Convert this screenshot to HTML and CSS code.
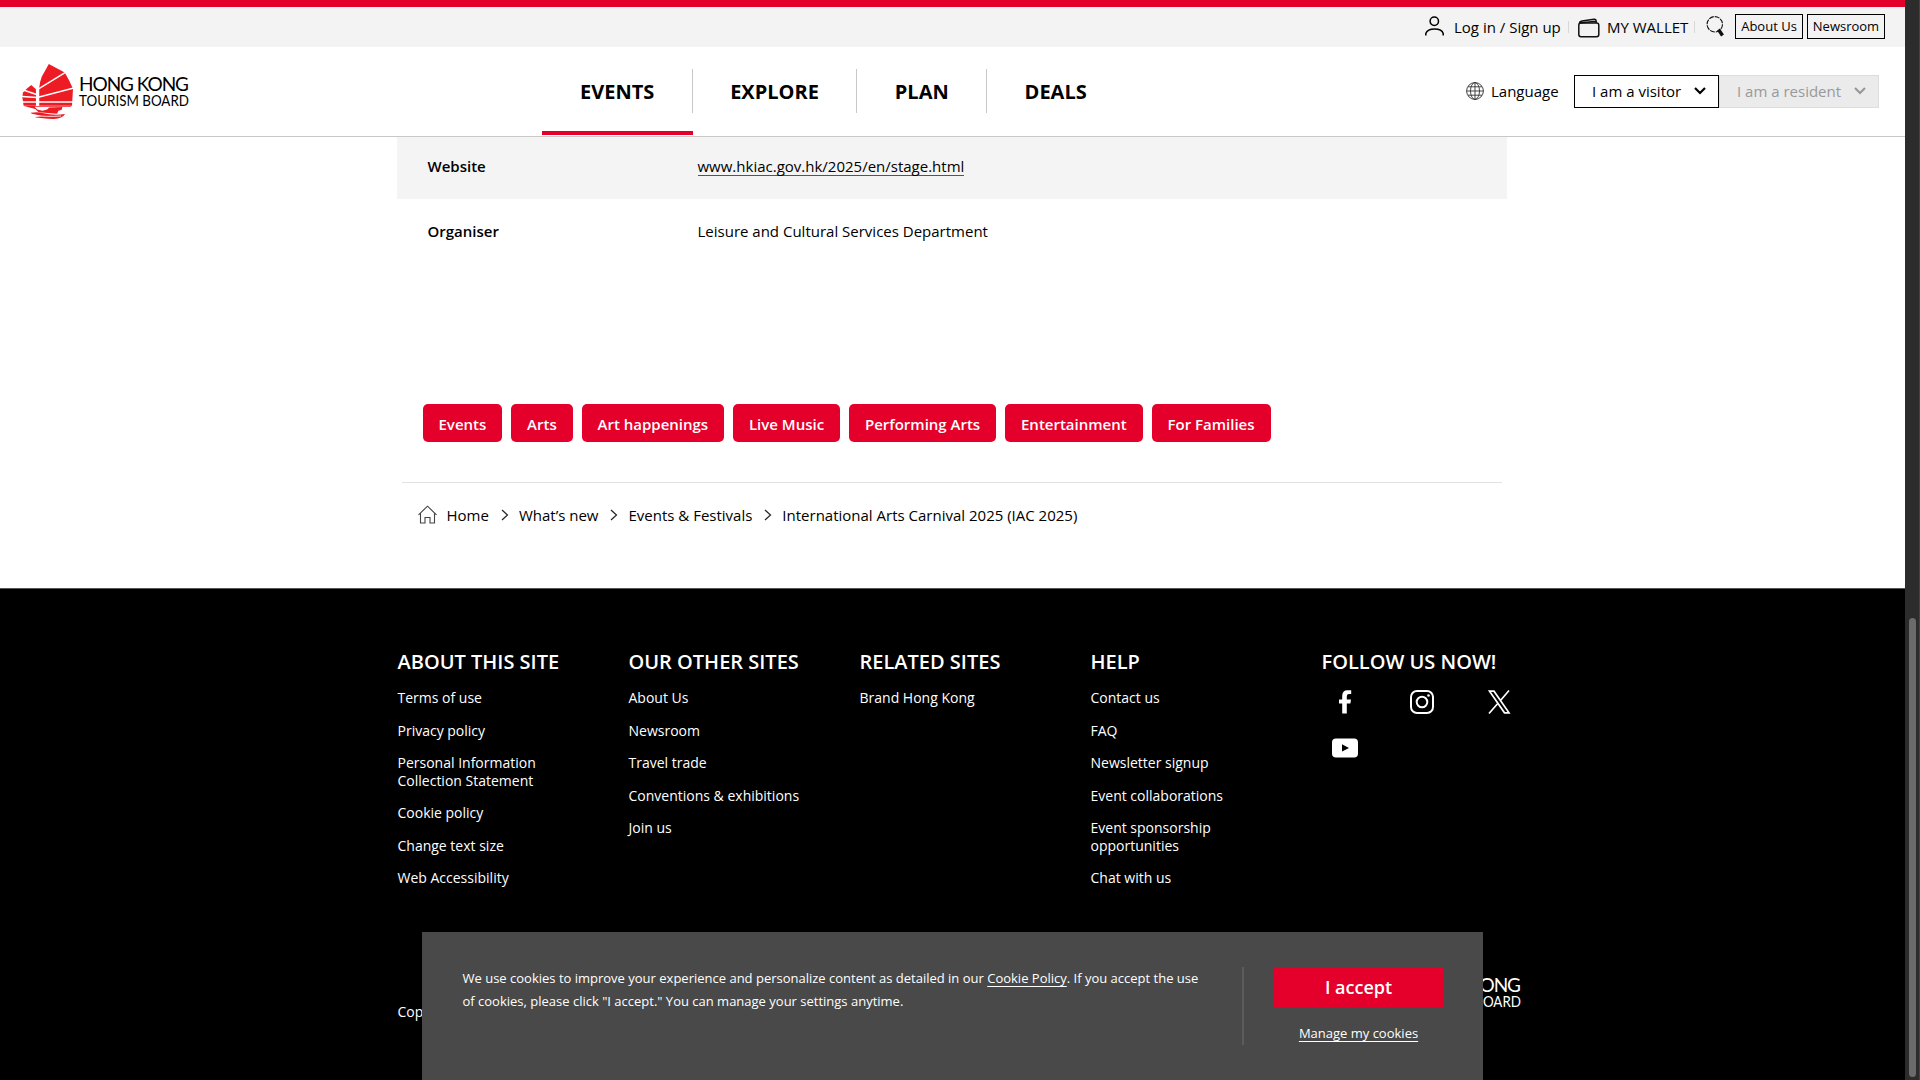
FILE: index.html
```html
<!DOCTYPE html>
<html lang="en">
<head>
<meta charset="utf-8">
<title>International Arts Carnival 2025 (IAC 2025)</title>
<link rel="stylesheet" href="styles.css">
</head>
<body>
<svg width="0" height="0" class="defs" aria-hidden="true">
  <symbol id="chev" viewBox="0 0 12 8"><path d="M1 1l5 5 5-5" fill="none" stroke="currentColor" stroke-width="2.2"/></symbol>
  <symbol id="crumb" viewBox="0 0 8 12"><path d="M1 1l5.500 5L1 11" fill="none" stroke="#222" stroke-width="1.200"/></symbol>
  <symbol id="junk" viewBox="0 0 154 166">
    <g class="ship">
      <path d="M81 0 129 26 142 49 154 75 151 126H52V72Q54 52 60 38Z"/>
      <path d="M28 63 42 76V126H5L1 100 3 86 15 74Z"/>
      <path d="M6 127H150L146 129H38L46 137 62 141 76 137 82 131 122 130 120 138 110 141 106 150 78 148 50 146 40 136Z"/>
      <path d="M26 147Q50 144 62 148Q94 156 130 151Q122 164 96 166Q60 165 38 161L60 157Q44 153 30 150Z"/>
    </g>
    <g class="gap" fill="none">
      <path d="M50 75 130 26M46 101 154 73M6 79 44 92M0 98 46 101"/>
      <path d="M0 114.500H154"/>
      <path d="M47 70V126"/>
      <path class="wave" d="M36 155Q70 160 118 157"/>
    </g>
  </symbol>
</svg>

<div class="page">
  <main class="content">
    <header class="header">
      <div class="topbar">
        <a class="top-link login">
          <svg width="19" height="20" viewBox="0 0 19 20" fill="none" stroke="#000" stroke-width="1.500"><circle cx="9.300" cy="5.200" r="4.200"/><path d="M.8 19.500V17.500Q2.500 13 9.500 13Q17 13 18.200 17.500V19.500"/></svg>
          <span>Log in / Sign up</span>
        </a>
        <i class="sep"></i>
        <a class="top-link wallet">
          <svg width="22" height="20" viewBox="0 0 22 20" fill="none" stroke="#111" stroke-width="1.500"><rect x=".8" y="5" width="20" height="13.700" rx="2.200"/><path d="M1.500 5.500Q1.500 3.500 4 3L16 1.200Q18 1 18.200 3V5M2 5 18 3.300" /></svg>
          <span>MY WALLET</span>
        </a>
        <i class="sep"></i>
        <svg class="search" width="19" height="21" viewBox="0 0 19 21" fill="none" stroke="#111"><circle cx="8.800" cy="8.300" r="7.700" stroke-width="1.100" stroke-dasharray="5 1"/><path d="M12.500 13.500 16.500 19.500" stroke-width="3.400"/></svg>
        <a class="boxed about">About Us</a>
        <a class="boxed news">Newsroom</a>
      </div>
      <div class="mainbar">
        <div class="logo">
          <svg width="51" height="55" class="on-white"><use href="#junk"/></svg>
          <svg width="116" height="55" viewBox="0 0 116 55" class="words"><text x="0" y="26.500" font-size="19" textLength="110">HONG KONG</text><text x="0" y="42" font-size="15" textLength="110" lengthAdjust="spacingAndGlyphs">TOURISM BOARD</text></svg>
        </div>
        <nav class="nav">
          <a class="active"><span>EVENTS</span></a>
          <a><span>EXPLORE</span></a>
          <a><span>PLAN</span></a>
          <a><span>DEALS</span></a>
        </nav>
        <div class="tools">
          <svg width="18" height="18" viewBox="0 0 18 18" fill="none" stroke="#333" stroke-width=".9"><circle cx="9" cy="9" r="8.400"/><ellipse cx="9" cy="9" rx="4.500" ry="8.400"/><path d="M9 .5V17.500M.5 9H17.500M2 4.800H16M2 13.200H16"/></svg>
          <span class="lang">Language</span>
          <div class="select visitor"><span>I am a visitor</span><svg width="12" height="8"><use href="#chev"/></svg></div>
          <div class="select resident"><span>I am a resident</span><svg width="12" height="8"><use href="#chev"/></svg></div>
        </div>
      </div>
    </header>

    <section class="details">
      <div class="row shaded"><b>Website</b><a class="url">www.hkiac.gov.hk/2025/en/stage.html</a></div>
      <div class="row"><b>Organiser</b><span class="org">Leisure and Cultural Services Department</span></div>
    </section>

    <div class="tags">
      <a>Events</a><a>Arts</a><a>Art happenings</a><a>Live Music</a><a>Performing Arts</a><a>Entertainment</a><a>For Families</a>
    </div>

    <div class="crumbs">
      <svg width="19" height="19" viewBox="0 0 19 19" fill="none" stroke="#444" stroke-width="1.100"><path d="M.5 9.800 9.500 1.200 18.500 9.800M2.500 8.500V18H7V12.500H12V18H16.500V8.500"/></svg>
      <a>Home</a><svg width="8" height="12"><use href="#crumb"/></svg>
      <a>What’s new</a><svg width="8" height="12"><use href="#crumb"/></svg>
      <a>Events &amp; Festivals</a><svg width="8" height="12"><use href="#crumb"/></svg>
      <span>International Arts Carnival 2025 (IAC 2025)</span>
    </div>

    <footer class="footer">
      <div class="columns">
        <div class="col"><h2>ABOUT THIS SITE</h2><a>Terms of use</a><a>Privacy policy</a><a>Personal Information<br>Collection Statement</a><a>Cookie policy</a><a>Change text size</a><a>Web Accessibility</a></div>
        <div class="col"><h2>OUR OTHER SITES</h2><a>About Us</a><a>Newsroom</a><a>Travel trade</a><a>Conventions &amp; exhibitions</a><a>Join us</a></div>
        <div class="col"><h2>RELATED SITES</h2><a>Brand Hong Kong</a></div>
        <div class="col"><h2>HELP</h2><a>Contact us</a><a>FAQ</a><a>Newsletter signup</a><a>Event collaborations</a><a>Event sponsorship<br>opportunities</a><a>Chat with us</a></div>
        <div class="col"><h2>FOLLOW US NOW!</h2>
          <div class="social">
            <svg viewBox="0 0 26 26"><path d="M10.200 24.500V14.500H7V10.500H10.200V7Q10.200 1.200 15.500 1.200H19.200V5H17Q14.800 5 14.800 7.200V10.500H19L18.400 14.500H14.800V24.500Z" fill="#fff"/></svg>
            <svg viewBox="0 0 26 26" fill="none" stroke="#fff" stroke-width="2"><rect x="2" y="2" width="22" height="22" rx="6"/><circle cx="13" cy="13" r="5.300"/><circle cx="19.500" cy="6.500" r="1.300" fill="#fff" stroke="none"/></svg>
            <svg viewBox="0 0 26 26" fill="none" stroke="#fff" stroke-width="1.700"><path d="M3.500 2.200H8L23 23.800H18.500ZM23 1.500 14.700 11.200M11.300 15 3 24.500"/></svg>
            <svg viewBox="0 0 26 26"><rect x="0" y="3.500" width="26" height="19" rx="4" fill="#fff"/><path d="M10 9.200 17 13 10 16.500Z" fill="#000"/></svg>
          </div>
        </div>
      </div>
      <div class="bottom">
        <span>Copyright</span>
        <div class="logo">
          <svg width="51" height="55" class="on-black"><use href="#junk"/></svg>
          <svg width="116" height="55" viewBox="0 0 116 55" class="words white"><text x="0" y="26.500" font-size="19" textLength="110">HONG KONG</text><text x="0" y="42" font-size="15" textLength="110" lengthAdjust="spacingAndGlyphs">TOURISM BOARD</text></svg>
        </div>
      </div>
    </footer>
  </main>
  <div class="scrollbar"><div class="thumb"></div></div>
</div>

<div class="cookie">
  <p>We use cookies to improve your experience and personalize content as detailed in our <a>Cookie Policy</a>. If you accept the use<br>of cookies, please click "I accept." You can manage your settings anytime.</p>
  <div class="choices"><div class="accept">I accept</div><a class="manage">Manage my cookies</a></div>
</div>
</body>
</html>
```
FILE: styles.css
```css
* { box-sizing: border-box; }
html, body { margin: 0; height: 100%; overflow: hidden; }
body { font-family: "Open Sans", "Noto Sans", sans-serif; font-size: 15px; line-height: 20px; color: #000; background: #fff; }
svg { display: block; flex: none; }
.defs { position: absolute; }
.page { display: flex; width: 1920px; height: 1080px; }
.content { width: 1905px; display: flex; flex-direction: column; }
.content span, .content a { white-space: nowrap; }

.header { height: 137px; flex: none; border-bottom: 1px solid #c8c8c8; }
.topbar { height: 47px; border-top: 7px solid #e4002b; background: #f3f3f3; display: flex; justify-content: flex-end; align-items: flex-start; padding-right: 20px; }
.top-link { display: flex; align-items: flex-start; padding-top: 9px; }
.top-link span { margin-top: 1px; }
.login { width: 143px; gap: 10px; }
.wallet { width: 116px; gap: 7px; }
.wallet svg { margin-top: 2px; }
.sep { width: 1px; height: 12px; margin: 14px 9px 0 0; background: #d8d8d8; }
.sep + .search { margin: 9px 10px 0 2px; }
.boxed { height: 25px; margin-top: 7px; border: 1px solid #000; font-size: 13px; line-height: 23px; text-align: center; }
.about { width: 68px; margin-right: 4px; }
.news { width: 78px; }

.mainbar { height: 89px; display: flex; }
.logo { display: flex; gap: 6px; }
.mainbar .logo { width: 542px; padding: 17px 0 0 22px; }
.ship { fill: #ed1c24; }
.gap { stroke: #fff; stroke-width: 4.5; }
.wave { stroke-width: 2.5; }
.words { overflow: visible; }
.words text { font-family: Lato, "Open Sans", sans-serif; }
.words.white { fill: #fff; }
.nav { display: flex; width: 640px; }
.nav a { height: 88px; padding-top: 22px; font-size: 20px; font-weight: 700; border-bottom: 4px solid transparent; }
.nav span { display: block; height: 44px; line-height: 46px; padding: 0 37.3px 0 37.6px; border-right: 1px solid #c8c8c8; }
.nav .active span { padding: 0 37.3px 0 38px; }
.nav a:last-child span { border: 0; }
.nav .active { border-bottom-color: #e4002b; }
.tools { display: flex; align-items: flex-start; margin-left: auto; padding: 28px 26px 0 0; }
.tools > svg { margin-top: 7px; }
.lang { width: 83px; margin: 6px 0 0 7px; }
.select { height: 33px; display: flex; align-items: center; justify-content: space-between; padding: 0 12px 1px 17px; border: 1px solid #000; }
.visitor { width: 145px; }
.resident { width: 160px; color: #999; background: #ebebeb; border-color: #ddd; }

.details { width: 1110px; margin-left: 397px; height: 267px; flex: none; }
.row { display: flex; height: 63px; padding: 19px 30px 0 30.5px; }
.row.shaded { height: 62px; background: #f4f4f4; }
.row b { width: 270px; font-weight: 600; }
.row + .row { padding-top: 22px; }
.url { height: 20px; border-bottom: 1px solid #555; }

.tags { display: flex; gap: 8.8px; width: 1100px; height: 79px; flex: none; margin-left: 402px; padding-left: 20.5px; border-bottom: 1px solid #e2e2e2; }
.tags a { height: 38px; padding: 0 16px; border-radius: 5px; background: #e4002b; color: #fff; font-weight: 600; line-height: 40px; }
.crumbs { display: flex; align-items: center; height: 105px; flex: none; padding: 0 0 42px 417.5px; }
.crumbs svg + a { margin-left: 10px; }
.crumbs a + svg { margin-left: 12px; }
.crumbs svg + span { margin-left: 10px; }

.footer { flex: 1; background: #000; border-top: 1px solid #555; color: #fff; padding: 61px 0 0 397.5px; }
.columns { display: flex; height: 315px; }
.col { width: 231px; display: flex; flex-direction: column; gap: 15px; font-size: 14px; line-height: 17.5px; }
.col h2 { margin: 0; font-size: 20px; line-height: 24px; font-weight: 600; white-space: nowrap; }
.social { display: grid; grid-template-columns: repeat(3, 77px); row-gap: 20px; padding-left: 10px; }
.social svg { width: 26px; height: 26px; }
.bottom { display: flex; padding-right: 378px; }
.bottom > span { width: 957px; padding-top: 37px; font-size: 14px; }

.scrollbar { width: 15px; padding: 618px 3px 0 4px; background: #2c2c2c; border-right: 1px solid #444; }
.thumb { height: 459px; border-radius: 4px; background: #6b6b6b; }

.cookie { position: fixed; left: 422px; top: 932px; width: 1061px; height: 148px; padding: 35px 40px 35px 40.5px; display: flex; justify-content: space-between; background: #494949; color: #fff; font-size: 13px; }
.cookie p { margin: 0; line-height: 23px; white-space: nowrap; }
.cookie p a { text-decoration: underline; text-underline-offset: 3px; }
.choices { width: 201px; height: 78px; padding-left: 30px; border-left: 2px solid #5c5c5c; text-align: center; }
.accept { height: 40px; margin-bottom: 16px; background: #e4002b; font-size: 18px; font-weight: 600; line-height: 41px; }
.manage { text-decoration: underline; text-underline-offset: 3px; }
```
